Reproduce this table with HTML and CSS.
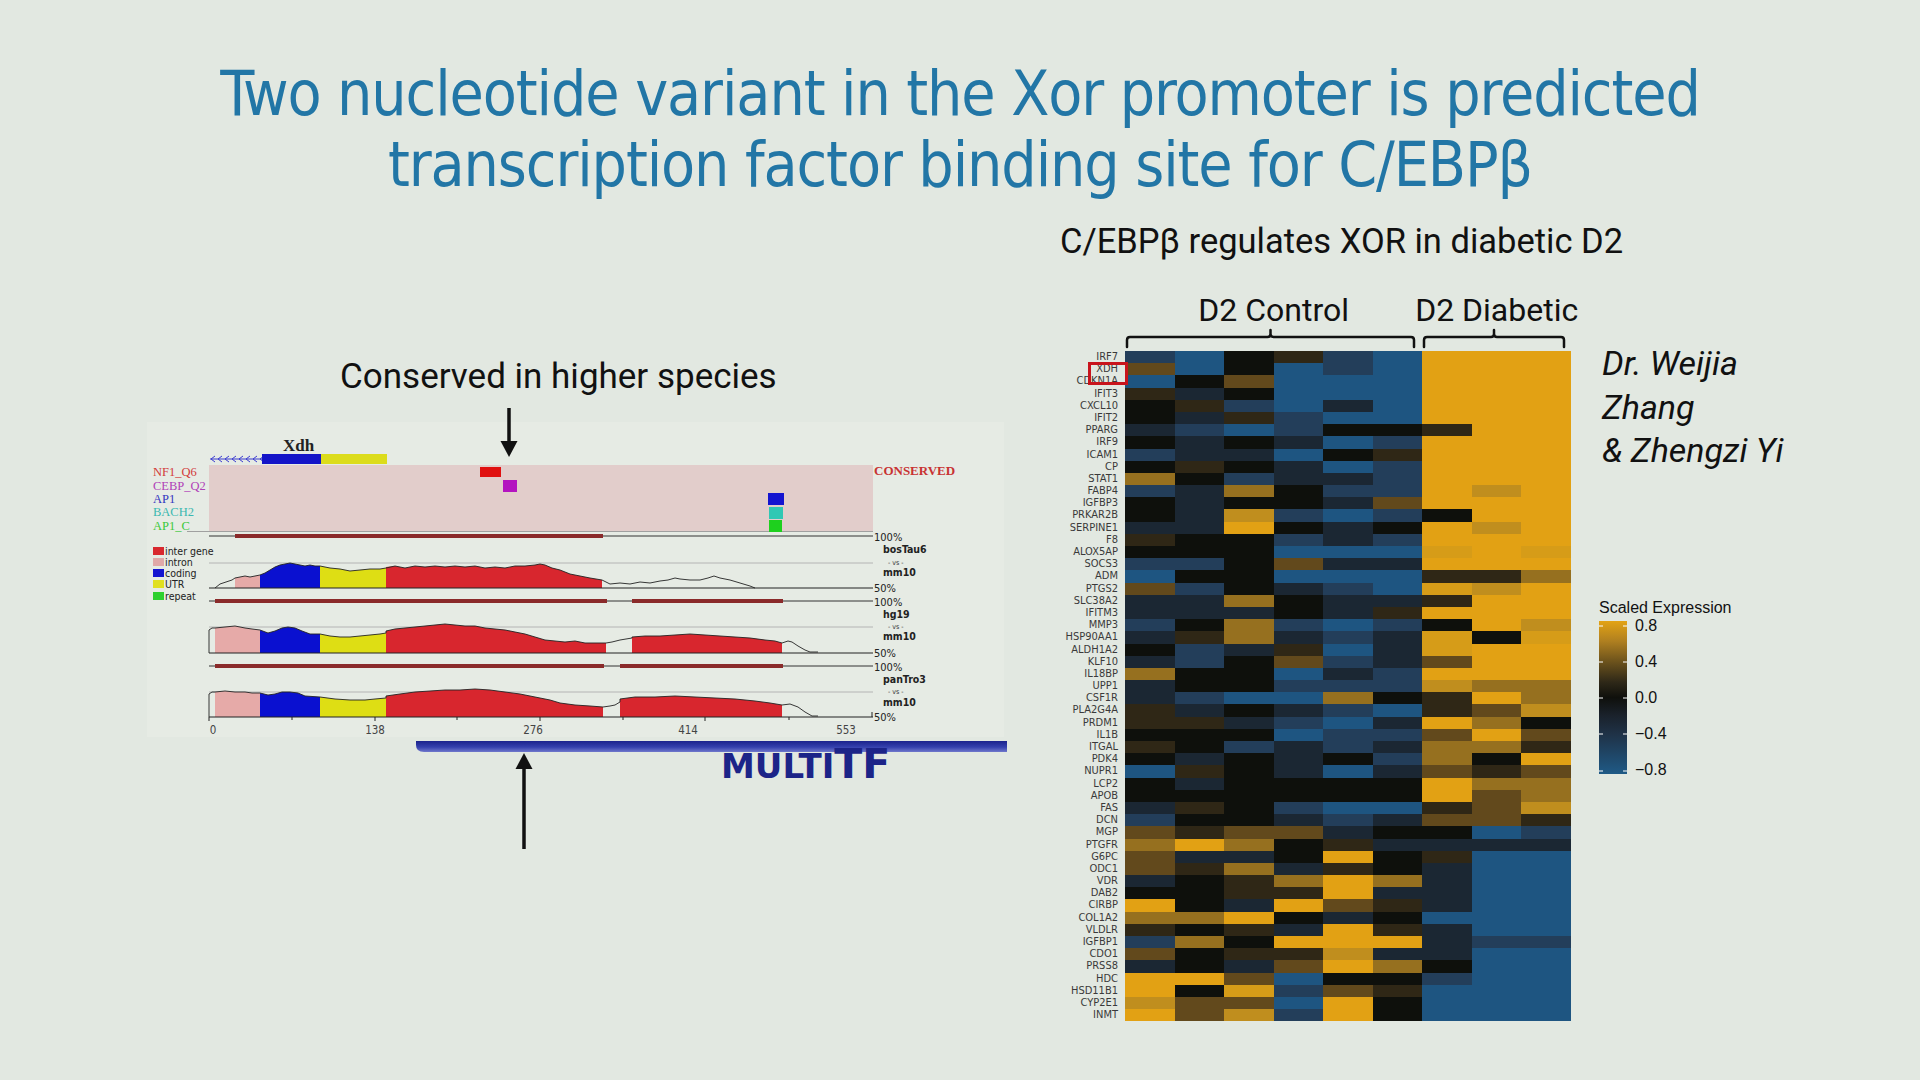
FILE: index.html
```html
<!DOCTYPE html>
<html lang="en">
<head>
<meta charset="utf-8">
<title>Xor promoter C/EBPβ</title>
<link rel="stylesheet" href="styles.css">
</head>
<body>
<main class="slide">
  <h1 class="title">Two nucleotide variant in the Xor promoter is predicted<br>transcription factor binding site for C/EBPβ</h1>
  <div class="content">
    <section class="left">
      <p class="caption">Conserved in higher species</p>
      <svg class="figure" width="860" height="452" viewBox="147 400 860 452" xmlns="http://www.w3.org/2000/svg">
        <defs>
          <linearGradient id="barGrad" x1="0" y1="0" x2="0" y2="1">
            <stop offset="0" stop-color="#1b238c"/>
            <stop offset="0.55" stop-color="#3440ad"/>
            <stop offset="1" stop-color="#7078cc"/>
          </linearGradient>
        </defs>
        <rect x="147" y="422" width="857" height="315" fill="#e6ebe4"/>
        <!-- gene header -->
        <text class="fig-xdh" x="283" y="451">Xdh</text>
        <line x1="210" y1="459" x2="262" y2="459" stroke="#3c3cd0" stroke-width="1"/>
        <path d="M215,456 L211,459 L215,462 M222,456 L218,459 L222,462 M229,456 L225,459 L229,462 M236,456 L232,459 L236,462 M243,456 L239,459 L243,462 M250,456 L246,459 L250,462 M257,456 L253,459 L257,462 M264,456 L260,459 L264,462" fill="none" stroke="#3c3cd0" stroke-width="1"/>
        <rect x="262" y="454" width="59" height="10" fill="#1414c8"/>
        <rect x="321" y="454" width="66" height="10" fill="#dcdc1c"/>
        <!-- TF track -->
        <rect x="209" y="465" width="664" height="66" fill="#e2cdcb"/>
        <line x1="187" y1="531.5" x2="873" y2="531.5" stroke="#a0a0a0" stroke-width="1"/>
        <text class="fig-tf" x="153" y="476" fill="#d23a3a">NF1_Q6</text>
        <text class="fig-tf" x="153" y="490" fill="#b040b8">CEBP_Q2</text>
        <text class="fig-tf" x="153" y="503" fill="#3434c0">AP1</text>
        <text class="fig-tf" x="153" y="516" fill="#3ab8b0">BACH2</text>
        <text class="fig-tf" x="153" y="530" fill="#3ac83a">AP1_C</text>
        <rect x="480" y="467" width="21" height="10" fill="#e01010"/>
        <rect x="503" y="480" width="14" height="12" fill="#b414c0"/>
        <rect x="768" y="493" width="16" height="12" fill="#1414d0"/>
        <rect x="769" y="507" width="14" height="12" fill="#30c8b4"/>
        <rect x="769" y="520" width="13" height="12" fill="#1ed01e"/>
        <text class="fig-cons" x="874" y="475">CONSERVED</text>
        <!-- legend -->
        <rect x="153" y="547" width="11" height="8" fill="#d8282e"/>
        <rect x="153" y="558" width="11" height="8" fill="#e0a8a8"/>
        <rect x="153" y="569" width="11" height="8" fill="#1414d0"/>
        <rect x="153" y="580" width="11" height="8" fill="#e0e020"/>
        <rect x="153" y="592" width="11" height="8" fill="#2ed02e"/>
        <text class="fig-leg" x="165" y="555">inter gene</text>
        <text class="fig-leg" x="165" y="566">intron</text>
        <text class="fig-leg" x="165" y="577">coding</text>
        <text class="fig-leg" x="165" y="588">UTR</text>
        <text class="fig-leg" x="165" y="600">repeat</text>
        <!-- track 1 -->
        <line x1="209" y1="536" x2="873" y2="536" stroke="#333" stroke-width="1"/>
        <rect x="235" y="534" width="368" height="4" fill="#8a2a2a"/>
        <line x1="209" y1="563" x2="873" y2="563" stroke="#b4b4b4" stroke-width="1"/>
        <polygon fill="#e6aaa8" points="235,578 240,577 245,576 250,577 255,576 260,575 260,588 235,588"/>
        <polygon fill="#0a10d0" points="260,575 265,573 270,570 275,567 280,565 285,564 290,563 295,564 300,565 305,566 310,565 315,566 320,566 320,588 260,588"/>
        <polygon fill="#dede14" points="320,566 330,568 340,569 350,571 360,570 370,569 380,569 386,568 386,588 320,588"/>
        <polygon fill="#d8262e" points="386,567 395,566 405,568 415,566 425,567 435,566 445,567 455,566 465,567 475,566 485,568 495,567 505,568 515,566 525,566 535,565 540,564 545,565 552,568 560,570 570,574 580,576 590,578 596,579 602,580 602,588 386,588"/>
        <polyline fill="none" stroke="#222" stroke-width="0.9" points="215,588 220,584 226,582 232,580 235,578 240,577 245,576 250,577 255,576 260,575 265,573 270,570 275,567 280,565 285,564 290,563 295,564 300,565 305,566 310,565 315,566 320,566 330,568 340,569 350,571 360,570 370,569 380,569 386,568 395,566 405,568 415,566 425,567 435,566 445,567 455,566 465,567 475,566 485,568 495,567 505,568 515,566 525,566 535,565 540,564 545,565 552,568 560,570 570,574 580,576 590,578 596,579 602,580 610,584 620,583 630,584 640,582 650,583 660,581 668,580 675,578 680,579 690,580 700,580 708,578 714,576 720,578 730,580 740,583 750,586 755,588"/>
        <line x1="209" y1="588" x2="873" y2="588" stroke="#222" stroke-width="1"/>
        <text class="fig-pct" x="874" y="541">100%</text>
        <text class="fig-sp" x="883" y="553">bosTau6</text>
        <text class="fig-vs" x="888" y="565">- vs -</text>
        <text class="fig-sp" x="883" y="576">mm10</text>
        <text class="fig-pct" x="874" y="592">50%</text>
        <!-- track 2 -->
        <line x1="209" y1="601" x2="873" y2="601" stroke="#333" stroke-width="1"/>
        <rect x="215" y="599" width="392" height="4" fill="#8a2a2a"/>
        <rect x="632" y="599" width="151" height="4" fill="#8a2a2a"/>
        <line x1="209" y1="627" x2="873" y2="627" stroke="#b4b4b4" stroke-width="1"/>
        <polygon fill="#e6aaa8" points="215,628 225,627 235,626 245,628 252,629 260,630 260,653 215,653"/>
        <polygon fill="#0a10d0" points="260,630 268,633 275,631 282,628 288,627 295,628 302,631 310,634 320,634 320,653 260,653"/>
        <polygon fill="#dede14" points="320,634 330,636 340,637 350,637 360,636 370,635 380,634 386,633 386,653 320,653"/>
        <polygon fill="#d8262e" points="386,631 395,629 405,628 415,627 425,626 435,625 445,624 455,625 465,626 475,626 485,628 495,629 505,630 515,632 525,634 535,637 545,640 555,641 565,642 575,641 585,643 595,643 606,643 606,653 386,653"/>
        <polygon fill="#d8262e" points="632,637 645,636 660,636 675,635 690,634 705,635 720,636 735,637 750,638 765,640 775,641 782,643 782,653 632,653"/>
        <polyline fill="none" stroke="#222" stroke-width="0.9" points="209,653 209,630 212,628 215,628 225,627 235,626 245,628 252,629 260,630 268,633 275,631 282,628 288,627 295,628 302,631 310,634 320,634 330,636 340,637 350,637 360,636 370,635 380,634 386,633 386,631 395,629 405,628 415,627 425,626 435,625 445,624 455,625 465,626 475,626 485,628 495,629 505,630 515,632 525,634 535,637 545,640 555,641 565,642 575,641 585,643 595,643 606,643 612,642 620,640 626,639 632,638 632,637 645,636 660,636 675,635 690,634 705,635 720,636 735,637 750,638 765,640 775,641 782,643 788,641 792,642 798,646 805,650 810,652 818,652"/>
        <line x1="209" y1="653" x2="873" y2="653" stroke="#222" stroke-width="1"/>
        <text class="fig-pct" x="874" y="606">100%</text>
        <text class="fig-sp" x="883" y="618">hg19</text>
        <text class="fig-vs" x="888" y="629">- vs -</text>
        <text class="fig-sp" x="883" y="640">mm10</text>
        <text class="fig-pct" x="874" y="657">50%</text>
        <!-- track 3 -->
        <line x1="209" y1="666" x2="873" y2="666" stroke="#333" stroke-width="1"/>
        <rect x="215" y="664" width="389" height="4" fill="#8a2a2a"/>
        <rect x="620" y="664" width="163" height="4" fill="#8a2a2a"/>
        <line x1="209" y1="692" x2="873" y2="692" stroke="#b4b4b4" stroke-width="1"/>
        <polygon fill="#e6aaa8" points="215,692 225,691 235,692 245,692 252,693 260,693 260,717 215,717"/>
        <polygon fill="#0a10d0" points="260,693 268,695 275,694 282,692 290,692 298,693 305,696 320,697 320,717 260,717"/>
        <polygon fill="#dede14" points="320,697 335,699 350,700 365,700 375,699 386,698 386,717 320,717"/>
        <polygon fill="#d8262e" points="386,696 400,694 415,692 430,691 445,690 460,690 475,689 490,690 505,692 520,694 535,697 550,700 560,703 575,705 590,706 603,707 603,717 386,717"/>
        <polygon fill="#d8262e" points="620,699 635,697 655,697 675,696 695,697 715,698 735,699 755,701 770,703 782,705 782,717 620,717"/>
        <polyline fill="none" stroke="#222" stroke-width="0.9" points="209,717 209,694 212,692 215,692 225,691 235,692 245,692 252,693 260,693 268,695 275,694 282,692 290,692 298,693 305,696 320,697 335,699 350,700 365,700 375,699 386,698 386,696 400,694 415,692 430,691 445,690 460,690 475,689 490,690 505,692 520,694 535,697 550,700 560,703 575,705 590,706 603,707 610,706 615,705 620,702 620,699 635,697 655,697 675,696 695,697 715,698 735,699 755,701 770,703 782,705 790,704 798,707 805,712 812,716 818,716"/>
        <line x1="209" y1="717" x2="873" y2="717" stroke="#222" stroke-width="1"/>
        <path d="M209,717 V721 M292,717 V720 M375,717 V721 M457,717 V720 M540,717 V721 M623,717 V720 M705,717 V721 M789,717 V720 M872,717 V712" stroke="#222" stroke-width="1"/>
        <text class="fig-pct" x="874" y="671">100%</text>
        <text class="fig-sp" x="883" y="683">panTro3</text>
        <text class="fig-vs" x="888" y="694">- vs -</text>
        <text class="fig-sp" x="883" y="706">mm10</text>
        <text class="fig-pct" x="874" y="721">50%</text>
        <text class="fig-ax" x="213" y="734">0</text>
        <text class="fig-ax" x="375" y="734">138</text>
        <text class="fig-ax" x="533" y="734">276</text>
        <text class="fig-ax" x="688" y="734">414</text>
        <text class="fig-ax" x="846" y="734">553</text>
        <!-- MULTITF banner -->
        <path d="M416,741 H1007 V752 H424 Q416,752 416,745 Z" fill="url(#barGrad)"/>
        <text class="fig-multi" x="721" y="778"><tspan class="fig-multi-s">MULTI</tspan><tspan class="fig-multi-l">TF</tspan></text>
        <!-- annotation arrows -->
        <line x1="509" y1="408" x2="509" y2="444" stroke="#111" stroke-width="3.5"/>
        <polygon points="500.5,441 517.5,441 509,457" fill="#111"/>
        <line x1="524" y1="766" x2="524" y2="849" stroke="#111" stroke-width="3.5"/>
        <polygon points="515.5,769 532.5,769 524,753" fill="#111"/>
      </svg>
    </section>

    <section class="right">
      <h2 class="subtitle">C/EBPβ regulates XOR in diabetic D2</h2>
      <div class="heat-area">
        <div class="groups">
          <span class="group">D2 Control</span>
          <span class="group">D2 Diabetic</span>
        </div>
        <svg class="brackets" width="446" height="23" viewBox="0 0 446 23" xmlns="http://www.w3.org/2000/svg">
          <path d="M2,19 V12 Q2,9 5,9 H142.5 Q145.5,9 145.5,6 V2 M145.5,6 Q145.5,9 148.5,9 H286 Q289,9 289,12 V19" fill="none" stroke="#111" stroke-width="2.5" stroke-linecap="round"/>
          <path d="M299,19 V12 Q299,9 302,9 H366 Q369,9 369,6 V2 M369,6 Q369,9 372,9 H436 Q439,9 439,12 V19" fill="none" stroke="#111" stroke-width="2.5" stroke-linecap="round"/>
        </svg>
        <div class="genes">
          <span>IRF7</span><span>XDH</span><span>CDKN1A</span><span>IFIT3</span><span>CXCL10</span><span>IFIT2</span><span>PPARG</span><span>IRF9</span><span>ICAM1</span><span>CP</span><span>STAT1</span><span>FABP4</span><span>IGFBP3</span><span>PRKAR2B</span><span>SERPINE1</span><span>F8</span><span>ALOX5AP</span><span>SOCS3</span><span>ADM</span><span>PTGS2</span><span>SLC38A2</span><span>IFITM3</span><span>MMP3</span><span>HSP90AA1</span><span>ALDH1A2</span><span>KLF10</span><span>IL18BP</span><span>UPP1</span><span>CSF1R</span><span>PLA2G4A</span><span>PRDM1</span><span>IL1B</span><span>ITGAL</span><span>PDK4</span><span>NUPR1</span><span>LCP2</span><span>APOB</span><span>FAS</span><span>DCN</span><span>MGP</span><span>PTGFR</span><span>G6PC</span><span>ODC1</span><span>VDR</span><span>DAB2</span><span>CIRBP</span><span>COL1A2</span><span>VLDLR</span><span>IGFBP1</span><span>CDO1</span><span>PRSS8</span><span>HDC</span><span>HSD11B1</span><span>CYP2E1</span><span>INMT</span>
          <div class="highlight"></div>
        </div>
        <div class="heatmap">
<i class="v2"></i><i class="v1"></i><i class="v4"></i><i class="v5"></i><i class="v2"></i><i class="v1"></i><i class="v10"></i><i class="v10"></i><i class="v10"></i>
<i class="v6"></i><i class="v1"></i><i class="v4"></i><i class="v1"></i><i class="v2"></i><i class="v1"></i><i class="v10"></i><i class="v10"></i><i class="v10"></i>
<i class="v1"></i><i class="v4"></i><i class="v6"></i><i class="v1"></i><i class="v1"></i><i class="v1"></i><i class="v10"></i><i class="v10"></i><i class="v10"></i>
<i class="v5"></i><i class="v3"></i><i class="v4"></i><i class="v1"></i><i class="v1"></i><i class="v1"></i><i class="v10"></i><i class="v10"></i><i class="v10"></i>
<i class="v4"></i><i class="v5"></i><i class="v2"></i><i class="v1"></i><i class="v3"></i><i class="v1"></i><i class="v10"></i><i class="v10"></i><i class="v10"></i>
<i class="v4"></i><i class="v3"></i><i class="v5"></i><i class="v2"></i><i class="v1"></i><i class="v1"></i><i class="v10"></i><i class="v10"></i><i class="v10"></i>
<i class="v3"></i><i class="v2"></i><i class="v1"></i><i class="v2"></i><i class="v4"></i><i class="v4"></i><i class="v5"></i><i class="v10"></i><i class="v10"></i>
<i class="v4"></i><i class="v3"></i><i class="v4"></i><i class="v3"></i><i class="v1"></i><i class="v2"></i><i class="v10"></i><i class="v10"></i><i class="v10"></i>
<i class="v2"></i><i class="v3"></i><i class="v3"></i><i class="v1"></i><i class="v4"></i><i class="v5"></i><i class="v10"></i><i class="v10"></i><i class="v10"></i>
<i class="v4"></i><i class="v5"></i><i class="v4"></i><i class="v3"></i><i class="v1"></i><i class="v2"></i><i class="v10"></i><i class="v10"></i><i class="v10"></i>
<i class="v7"></i><i class="v4"></i><i class="v2"></i><i class="v3"></i><i class="v3"></i><i class="v2"></i><i class="v10"></i><i class="v10"></i><i class="v10"></i>
<i class="v2"></i><i class="v3"></i><i class="v7"></i><i class="v4"></i><i class="v2"></i><i class="v2"></i><i class="v10"></i><i class="v8"></i><i class="v10"></i>
<i class="v4"></i><i class="v3"></i><i class="v4"></i><i class="v4"></i><i class="v3"></i><i class="v6"></i><i class="v10"></i><i class="v10"></i><i class="v10"></i>
<i class="v4"></i><i class="v3"></i><i class="v8"></i><i class="v2"></i><i class="v1"></i><i class="v2"></i><i class="v4"></i><i class="v10"></i><i class="v10"></i>
<i class="v3"></i><i class="v3"></i><i class="v10"></i><i class="v4"></i><i class="v3"></i><i class="v4"></i><i class="v10"></i><i class="v8"></i><i class="v10"></i>
<i class="v5"></i><i class="v4"></i><i class="v4"></i><i class="v2"></i><i class="v3"></i><i class="v2"></i><i class="v10"></i><i class="v10"></i><i class="v10"></i>
<i class="v4"></i><i class="v4"></i><i class="v4"></i><i class="v1"></i><i class="v1"></i><i class="v1"></i><i class="v9"></i><i class="v10"></i><i class="v9"></i>
<i class="v2"></i><i class="v2"></i><i class="v4"></i><i class="v6"></i><i class="v3"></i><i class="v3"></i><i class="v10"></i><i class="v10"></i><i class="v10"></i>
<i class="v1"></i><i class="v4"></i><i class="v4"></i><i class="v1"></i><i class="v1"></i><i class="v1"></i><i class="v5"></i><i class="v5"></i><i class="v7"></i>
<i class="v6"></i><i class="v2"></i><i class="v4"></i><i class="v3"></i><i class="v2"></i><i class="v1"></i><i class="v9"></i><i class="v8"></i><i class="v10"></i>
<i class="v3"></i><i class="v3"></i><i class="v7"></i><i class="v4"></i><i class="v3"></i><i class="v3"></i><i class="v5"></i><i class="v10"></i><i class="v10"></i>
<i class="v3"></i><i class="v3"></i><i class="v3"></i><i class="v4"></i><i class="v3"></i><i class="v5"></i><i class="v10"></i><i class="v10"></i><i class="v10"></i>
<i class="v2"></i><i class="v4"></i><i class="v7"></i><i class="v2"></i><i class="v1"></i><i class="v2"></i><i class="v4"></i><i class="v10"></i><i class="v8"></i>
<i class="v3"></i><i class="v5"></i><i class="v7"></i><i class="v3"></i><i class="v2"></i><i class="v3"></i><i class="v9"></i><i class="v4"></i><i class="v9"></i>
<i class="v4"></i><i class="v2"></i><i class="v3"></i><i class="v5"></i><i class="v1"></i><i class="v3"></i><i class="v9"></i><i class="v10"></i><i class="v10"></i>
<i class="v3"></i><i class="v2"></i><i class="v4"></i><i class="v6"></i><i class="v2"></i><i class="v3"></i><i class="v6"></i><i class="v10"></i><i class="v10"></i>
<i class="v7"></i><i class="v4"></i><i class="v4"></i><i class="v1"></i><i class="v3"></i><i class="v2"></i><i class="v10"></i><i class="v10"></i><i class="v10"></i>
<i class="v3"></i><i class="v4"></i><i class="v4"></i><i class="v2"></i><i class="v2"></i><i class="v2"></i><i class="v8"></i><i class="v7"></i><i class="v7"></i>
<i class="v3"></i><i class="v2"></i><i class="v1"></i><i class="v1"></i><i class="v7"></i><i class="v4"></i><i class="v5"></i><i class="v10"></i><i class="v7"></i>
<i class="v5"></i><i class="v3"></i><i class="v4"></i><i class="v3"></i><i class="v2"></i><i class="v1"></i><i class="v5"></i><i class="v6"></i><i class="v8"></i>
<i class="v5"></i><i class="v5"></i><i class="v3"></i><i class="v2"></i><i class="v1"></i><i class="v3"></i><i class="v10"></i><i class="v7"></i><i class="v4"></i>
<i class="v4"></i><i class="v4"></i><i class="v4"></i><i class="v1"></i><i class="v2"></i><i class="v2"></i><i class="v6"></i><i class="v10"></i><i class="v6"></i>
<i class="v5"></i><i class="v4"></i><i class="v2"></i><i class="v3"></i><i class="v2"></i><i class="v3"></i><i class="v7"></i><i class="v7"></i><i class="v5"></i>
<i class="v4"></i><i class="v3"></i><i class="v4"></i><i class="v3"></i><i class="v4"></i><i class="v2"></i><i class="v7"></i><i class="v4"></i><i class="v10"></i>
<i class="v1"></i><i class="v5"></i><i class="v4"></i><i class="v3"></i><i class="v1"></i><i class="v3"></i><i class="v6"></i><i class="v5"></i><i class="v6"></i>
<i class="v4"></i><i class="v3"></i><i class="v4"></i><i class="v4"></i><i class="v4"></i><i class="v4"></i><i class="v10"></i><i class="v7"></i><i class="v7"></i>
<i class="v4"></i><i class="v4"></i><i class="v4"></i><i class="v4"></i><i class="v4"></i><i class="v4"></i><i class="v10"></i><i class="v6"></i><i class="v7"></i>
<i class="v3"></i><i class="v5"></i><i class="v4"></i><i class="v2"></i><i class="v1"></i><i class="v1"></i><i class="v5"></i><i class="v6"></i><i class="v8"></i>
<i class="v2"></i><i class="v4"></i><i class="v4"></i><i class="v3"></i><i class="v2"></i><i class="v3"></i><i class="v6"></i><i class="v6"></i><i class="v5"></i>
<i class="v6"></i><i class="v5"></i><i class="v6"></i><i class="v6"></i><i class="v3"></i><i class="v4"></i><i class="v4"></i><i class="v1"></i><i class="v2"></i>
<i class="v7"></i><i class="v10"></i><i class="v7"></i><i class="v4"></i><i class="v5"></i><i class="v3"></i><i class="v3"></i><i class="v3"></i><i class="v3"></i>
<i class="v6"></i><i class="v3"></i><i class="v3"></i><i class="v4"></i><i class="v10"></i><i class="v4"></i><i class="v5"></i><i class="v1"></i><i class="v1"></i>
<i class="v6"></i><i class="v5"></i><i class="v7"></i><i class="v3"></i><i class="v5"></i><i class="v4"></i><i class="v3"></i><i class="v1"></i><i class="v1"></i>
<i class="v3"></i><i class="v4"></i><i class="v5"></i><i class="v7"></i><i class="v10"></i><i class="v7"></i><i class="v3"></i><i class="v1"></i><i class="v1"></i>
<i class="v4"></i><i class="v4"></i><i class="v5"></i><i class="v5"></i><i class="v10"></i><i class="v3"></i><i class="v3"></i><i class="v1"></i><i class="v1"></i>
<i class="v10"></i><i class="v4"></i><i class="v3"></i><i class="v10"></i><i class="v6"></i><i class="v5"></i><i class="v3"></i><i class="v1"></i><i class="v1"></i>
<i class="v7"></i><i class="v7"></i><i class="v10"></i><i class="v4"></i><i class="v3"></i><i class="v4"></i><i class="v1"></i><i class="v1"></i><i class="v1"></i>
<i class="v5"></i><i class="v4"></i><i class="v5"></i><i class="v3"></i><i class="v10"></i><i class="v5"></i><i class="v3"></i><i class="v1"></i><i class="v1"></i>
<i class="v2"></i><i class="v7"></i><i class="v4"></i><i class="v10"></i><i class="v10"></i><i class="v10"></i><i class="v3"></i><i class="v2"></i><i class="v2"></i>
<i class="v6"></i><i class="v4"></i><i class="v5"></i><i class="v5"></i><i class="v8"></i><i class="v3"></i><i class="v3"></i><i class="v1"></i><i class="v1"></i>
<i class="v3"></i><i class="v4"></i><i class="v3"></i><i class="v6"></i><i class="v10"></i><i class="v7"></i><i class="v4"></i><i class="v1"></i><i class="v1"></i>
<i class="v10"></i><i class="v10"></i><i class="v6"></i><i class="v1"></i><i class="v4"></i><i class="v4"></i><i class="v2"></i><i class="v1"></i><i class="v1"></i>
<i class="v10"></i><i class="v4"></i><i class="v9"></i><i class="v2"></i><i class="v6"></i><i class="v5"></i><i class="v1"></i><i class="v1"></i><i class="v1"></i>
<i class="v8"></i><i class="v6"></i><i class="v6"></i><i class="v1"></i><i class="v10"></i><i class="v4"></i><i class="v1"></i><i class="v1"></i><i class="v1"></i>
<i class="v10"></i><i class="v6"></i><i class="v8"></i><i class="v2"></i><i class="v10"></i><i class="v4"></i><i class="v1"></i><i class="v1"></i><i class="v1"></i>
        </div>
        <div class="side">
          <p class="authors">Dr. Weijia<br>Zhang<br>&amp; Zhengzi Yi</p>
          <div class="legend">
            <p class="legend-title">Scaled Expression</p>
            <div class="legend-body">
              <svg class="legend-bar" width="28" height="153" viewBox="0 0 28 153" xmlns="http://www.w3.org/2000/svg">
                <defs>
                  <linearGradient id="scaleGrad" x1="0" y1="0" x2="0" y2="1">
                    <stop offset="0" stop-color="#e3a314"/>
                    <stop offset="0.13" stop-color="#b08020"/>
                    <stop offset="0.27" stop-color="#6a511c"/>
                    <stop offset="0.4" stop-color="#2e2818"/>
                    <stop offset="0.5" stop-color="#0f100c"/>
                    <stop offset="0.62" stop-color="#1a222c"/>
                    <stop offset="0.74" stop-color="#1f3247"/>
                    <stop offset="1" stop-color="#1f5a86"/>
                  </linearGradient>
                </defs>
                <rect width="28" height="153" fill="url(#scaleGrad)"/>
                <path d="M0,5 H4 M24,5 H28 M0,41 H4 M24,41 H28 M0,77 H4 M24,77 H28 M0,113 H4 M24,113 H28 M0,150 H4 M24,150 H28" stroke="#ffffff" stroke-width="1"/>
              </svg>
              <div class="legend-labels">
                <span>0.8</span><span>0.4</span><span>0.0</span><span>−0.4</span><span>−0.8</span>
              </div>
            </div>
          </div>
        </div>
      </div>
    </section>
  </div>
</main>
</body>
</html>
```

FILE: styles.css
```css
html, body {
  margin: 0;
  padding: 0;
}

body {
  background: #e2e8e1;
  font-family: "Roboto", "Liberation Sans", sans-serif;
  color: #111;
}

.slide {
  width: 1920px;
  height: 1080px;
  overflow: hidden;
  background: #e2e8e1;
}

.title {
  margin: 0;
  padding-top: 58px;
  font-family: "DejaVu Sans Condensed", "Liberation Sans", sans-serif;
  font-weight: 400;
  font-size: 62px;
  line-height: 71px;
  letter-spacing: -1.1px;
  color: #2276a6;
  text-align: center;
}

.content {
  display: flex;
  align-items: flex-start;
}

/* ---------- left column ---------- */
.left {
  margin-left: 147px;
  width: 860px;
  flex: none;
}

.caption {
  margin: 159px 0 0 193px;
  font-family: "Roboto", "Liberation Sans", sans-serif;
  font-size: 35px;
  line-height: 36px;
  color: #111;
  white-space: nowrap;
}

.figure {
  display: block;
  margin-top: 5px;
}

.fig-xdh {
  font-family: "Liberation Serif", serif;
  font-weight: 700;
  font-size: 17px;
  fill: #222;
}

.fig-tf {
  font-family: "Liberation Serif", serif;
  font-size: 12.5px;
}

.fig-cons {
  font-family: "Liberation Serif", serif;
  font-weight: 700;
  font-size: 13px;
  fill: #c83232;
}

.fig-leg {
  font-family: "DejaVu Sans Condensed", "Liberation Sans", sans-serif;
  font-size: 10.5px;
  fill: #222;
}

.fig-pct {
  font-family: "DejaVu Sans Condensed", "Liberation Sans", sans-serif;
  font-size: 11px;
  fill: #222;
}

.fig-sp {
  font-family: "DejaVu Sans Condensed", "Liberation Sans", sans-serif;
  font-weight: 700;
  font-size: 10.5px;
  fill: #222;
}

.fig-vs {
  font-family: "DejaVu Sans Condensed", "Liberation Sans", sans-serif;
  font-size: 7px;
  fill: #333;
}

.fig-ax {
  font-family: "DejaVu Sans Condensed", "Liberation Sans", sans-serif;
  font-size: 11.5px;
  fill: #444;
  text-anchor: middle;
}

.fig-multi {
  font-family: "DejaVu Sans", sans-serif;
  font-weight: 700;
  fill: #1c2488;
}

.fig-multi-s {
  font-size: 34px;
}

.fig-multi-l {
  font-size: 41px;
}

/* ---------- right column ---------- */
.right {
  margin-left: 33px;
  flex: 1;
}

.subtitle {
  margin: 21px 0 0 20px;
  font-family: "Roboto", "Liberation Sans", sans-serif;
  font-weight: 400;
  font-size: 34.5px;
  line-height: 40px;
  color: #111;
  white-space: nowrap;
}

.heat-area {
  margin-top: 31px;
  display: grid;
  grid-template-columns: 78px 446px auto;
  grid-template-rows: 36px 23px auto;
  column-gap: 7px;
}

.groups {
  grid-column: 2;
  grid-row: 1;
  display: grid;
  grid-template-columns: minmax(0, 6fr) minmax(0, 3fr);
  font-family: "Roboto", "Liberation Sans", sans-serif;
  font-size: 32px;
  line-height: 36px;
  color: #111;
}

.group {
  display: flex;
  justify-content: center;
  white-space: nowrap;
}

.brackets {
  grid-column: 2;
  grid-row: 2;
  display: block;
}

.genes {
  grid-column: 1;
  grid-row: 3;
  position: relative;
  display: flex;
  flex-direction: column;
  align-items: flex-end;
  font-family: "DejaVu Sans Condensed", "Liberation Sans", sans-serif;
  font-size: 11px;
  line-height: 12.2px;
  color: #3a3a3a;
}

.genes span {
  display: block;
  height: 12.2px;
  white-space: nowrap;
}

.highlight {
  position: absolute;
  left: 48px;
  top: 11px;
  width: 40px;
  height: 23px;
  box-sizing: border-box;
  border: 3px solid #c8141c;
}

.heatmap {
  grid-column: 2;
  grid-row: 3;
  display: grid;
  grid-template-columns: repeat(9, 1fr);
  grid-auto-rows: 12.2px;
}

.heatmap i {
  display: block;
}

.v1 { background: #1e5581; }
.v2 { background: #233e5a; }
.v3 { background: #1b2733; }
.v4 { background: #0e100c; }
.v5 { background: #2f2716; }
.v6 { background: #62491c; }
.v7 { background: #96701f; }
.v8 { background: #c08e1e; }
.v9 { background: #d69c18; }
.v10 { background: #e2a114; }

.side {
  grid-column: 3;
  grid-row: 2 / 4;
  padding-top: 14px;
}

.authors {
  margin: 0 0 0 24px;
  font-family: "Roboto", "Liberation Sans", sans-serif;
  font-style: italic;
  font-size: 34px;
  line-height: 43.5px;
  color: #111;
  white-space: nowrap;
}

.legend {
  margin: 126px 0 0 21px;
}

.legend-title {
  margin: 0;
  font-family: "Liberation Sans", sans-serif;
  font-size: 16px;
  line-height: 18px;
  color: #111;
}

.legend-body {
  display: flex;
  margin-top: 4px;
}

.legend-bar {
  display: block;
  flex: none;
}

.legend-labels {
  display: flex;
  flex-direction: column;
  margin: -13px 0 0 8px;
  font-family: "Liberation Sans", sans-serif;
  font-size: 16px;
  line-height: 36px;
  color: #111;
}
```
